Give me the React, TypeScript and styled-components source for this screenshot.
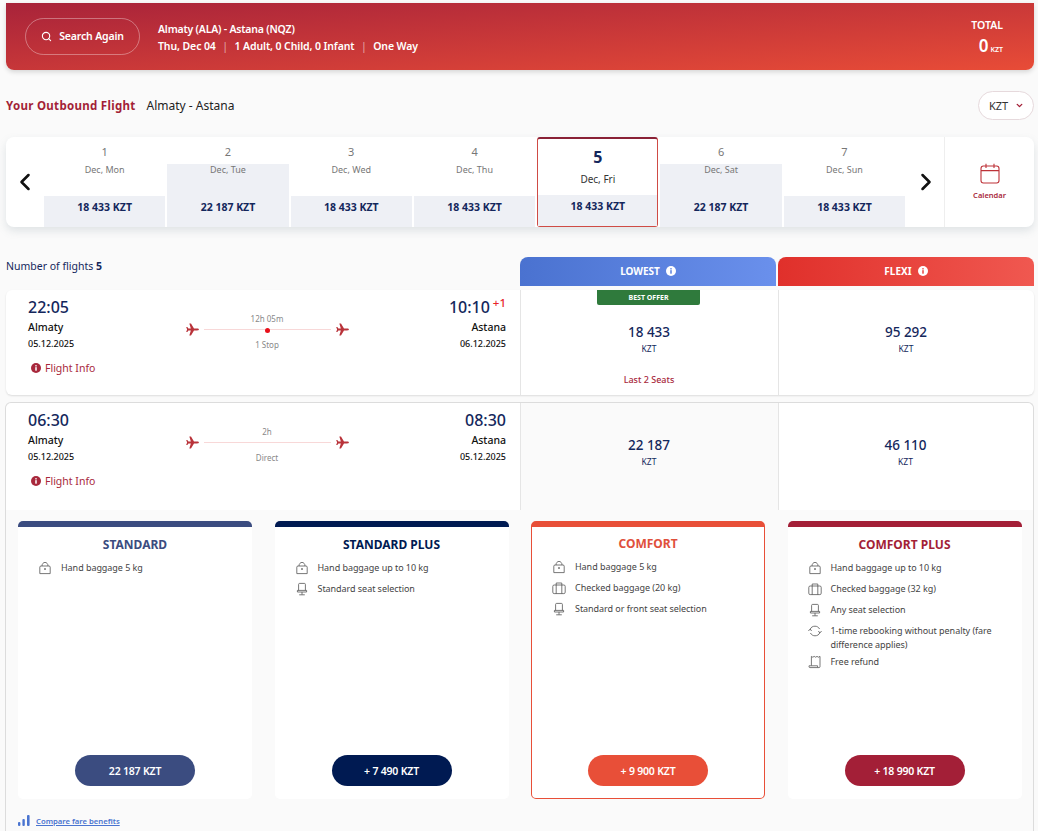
import React from 'react';
import styled, { createGlobalStyle } from 'styled-components';
import { ChevronDown, ChevronLeft, ChevronRight, Search } from 'lucide-react';

const GlobalStyle = createGlobalStyle`
  html, body {
    margin: 0;
    height: 831px;
    overflow: hidden;
    background: #fafafa;
  }
  * { box-sizing: border-box; }
  body {
    font-family: "Noto Sans", "Open Sans", sans-serif;
    color: #222;
  }
`;

const Page = styled.div`
  padding: 3px 4px 0 6px;
  height: 831px;
  overflow: hidden;
`;

const Banner = styled.header`
  height: 67px;
  display: flex;
  align-items: center;
  padding: 0 31px 0 19px;
  border-radius: 0 0 8px 8px;
  background: linear-gradient(176deg, #a8233a 0%, #e84c37 100%);
  box-shadow: 0 2px 5px rgba(0, 0, 0, 0.15);
  color: #fff;
`;

const SearchButton = styled.button`
  width: 115px;
  height: 37px;
  display: flex;
  align-items: center;
  justify-content: center;
  gap: 7px;
  padding: 0 0 1px;
  border: 1px solid rgba(255, 255, 255, 0.35);
  border-radius: 19px;
  background: transparent;
  color: #fff;
  font: 600 10.5px "Noto Sans", sans-serif;
  letter-spacing: -0.15px;
`;

const Summary = styled.div`
  margin: 2px 0 0 18px;
  font-size: 10.5px;
  font-weight: 600;
  line-height: 17px;
  letter-spacing: -0.2px;
`;

const SummaryDetails = styled.div`
  letter-spacing: -0.1px;
`;

const Divider = styled.span`
  margin: 0 6.5px;
  font-weight: 400;
  opacity: 0.55;
`;

const Total = styled.div`
  margin: 4px 0 0 auto;
  text-align: right;
  font-weight: 600;
`;

const TotalLabel = styled.div`
  font-size: 10.5px;
  line-height: 14px;
  margin-bottom: 4px;
`;

const TotalValue = styled.div`
  font-size: 17px;
  line-height: 20px;
  span {
    font-size: 7px;
    margin-left: 2px;
  }
`;

const OutboundRow = styled.div`
  height: 67px;
  display: flex;
  align-items: center;
  padding-top: 3px;
  font-size: 12px;
`;

const OutboundTitle = styled.strong`
  color: #a31f37;
  font-size: 11.5px;
  font-weight: 700;
  letter-spacing: 0.3px;
  margin-right: 11px;
`;

const CurrencySelect = styled.div`
  margin-left: auto;
  width: 56px;
  height: 29px;
  display: flex;
  align-items: center;
  justify-content: space-between;
  padding: 0 9px 0 10px;
  border: 1px solid #e6d9dc;
  border-radius: 15px;
  background: #fff;
  font-size: 11px;
  color: #a31f37;
  span {
    color: #333;
  }
`;

const DateStrip = styled.div`
  height: 90px;
  display: grid;
  grid-template-columns: 38px repeat(7, 123.3px) 1fr 90px;
  border-radius: 8px;
  background: #fff;
  box-shadow: 0 4px 8px rgba(120, 140, 150, 0.2);
`;

const ArrowCell = styled.div`
  display: flex;
  align-items: center;
  justify-content: center;
  color: #111;
`;

const DateCell = styled.div`
  display: flex;
  flex-direction: column;
  border-right: 2px solid #fff;
  text-align: center;
`;

const DayNumber = styled.div`
  height: 27px;
  padding-top: 7px;
  font-size: 11px;
  line-height: 16px;
  color: #777;
`;

const DateBody = styled.div<{ $tinted?: boolean }>`
  flex: 1;
  display: flex;
  flex-direction: column;
  background: ${p => (p.$tinted ? '#eef0f5' : 'transparent')};
`;

const DateLabel = styled.div`
  height: 32px;
  font-size: 9px;
  line-height: 12px;
  color: #777;
`;

const DatePrice = styled.div`
  height: 31px;
  background: #eef0f5;
  color: #14275c;
  font-size: 10.5px;
  font-weight: 700;
  line-height: 22px;
`;

const SelectedCell = styled.div`
  display: flex;
  flex-direction: column;
  margin-right: 2px;
  border: 1px solid #cf4b45;
  border-top: 2px solid #8a2136;
  border-radius: 3px;
  text-align: center;
`;

const SelectedDay = styled.div`
  flex: 1;
  padding-top: 8px;
  color: #14275c;
  font-size: 16px;
  font-weight: 700;
  line-height: 20px;
  small {
    display: block;
    margin-top: 5px;
    color: #333;
    font-size: 10px;
    font-weight: 400;
    line-height: 14px;
  }
`;

const SelectedPrice = styled.div`
  height: 31px;
  background: #eef0f5;
  color: #14275c;
  font-size: 10.5px;
  font-weight: 700;
  line-height: 22px;
`;

const CalendarCell = styled.div`
  display: flex;
  flex-direction: column;
  align-items: center;
  justify-content: center;
  gap: 6px;
  padding-bottom: 2px;
  border-left: 1px solid #eee;
  color: #a8283c;
  font-size: 7.5px;
  font-weight: 600;
`;

const FareGrid = styled.div`
  display: grid;
  grid-template-columns: 514px 256px 258px;
  margin-top: 30px;
`;

const FlightCount = styled.div`
  align-self: center;
  padding-bottom: 11px;
  font-size: 10.5px;
  color: #14275c;
`;

const FareTab = styled.div<{ $from: string; $to: string }>`
  height: 29px;
  display: flex;
  align-items: center;
  justify-content: center;
  gap: 6px;
  padding-bottom: 1px;
  border-radius: 8px 8px 0 0;
  background: linear-gradient(90deg, ${p => p.$from}, ${p => p.$to});
  color: #fff;
  font-size: 10px;
  font-weight: 700;
`;

const FlexiTab = styled(FareTab)`
  margin-left: 2px;
`;

const FlightCard = styled.div`
  display: grid;
  grid-template-columns: 514px 258px 1fr;
  height: 105px;
  margin-top: 4px;
  border-radius: 6px;
  background: #fff;
  box-shadow: 0 1px 2px rgba(0, 0, 0, 0.12);
`;

const OpenedFlight = styled.div`
  margin: 7px 0 0 -1px;
  height: 500px;
  border: 1px solid #dcdcdc;
  border-bottom: none;
  border-radius: 6px 6px 0 0;
  background: #fafafa;
`;

const OpenedRow = styled.div`
  display: grid;
  grid-template-columns: 514px 258px 1fr;
  height: 107px;
  background: #fff;
  border-radius: 6px 6px 0 0;
`;

const FlightInfo = styled.div`
  display: grid;
  grid-template-columns: 1fr 172px 1fr;
  padding: 7px 14px 0 22px;
`;

const Endpoint = styled.div<{ $right?: boolean }>`
  text-align: ${p => (p.$right ? 'right' : 'left')};
`;

const Time = styled.div`
  color: #14275c;
  font-size: 16px;
  font-weight: 500;
  line-height: 20px;
  sup {
    color: #e8222a;
    font-size: 11.5px;
    line-height: 0;
    margin-left: 3px;
    vertical-align: 6px;
  }
`;

const City = styled.div`
  margin-top: 1px;
  font-size: 10.5px;
  font-weight: 500;
  line-height: 18px;
  color: #111;
`;

const FlightDate = styled.div`
  font-size: 9px;
  font-weight: 500;
  line-height: 16px;
  color: #111;
`;

const InfoLink = styled.div`
  display: flex;
  align-items: center;
  gap: 4px;
  margin: 8px 0 0 3px;
  color: #a8283c;
  font-size: 10.5px;
  line-height: 16px;
`;

const Route = styled.div`
  display: grid;
  grid-template-columns: 13px 1fr 13px;
  column-gap: 5px;
  align-items: center;
  align-self: start;
  height: 46px;
  margin: 9px 4.5px 0;
`;

const RouteMiddle = styled.div`
  display: flex;
  flex-direction: column;
  align-items: center;
  padding-top: 6px;
  color: #888;
  font-size: 8px;
  line-height: 12px;
`;

const RouteLine = styled.div`
  position: relative;
  align-self: stretch;
  height: 1px;
  margin: 4px 0 9px;
  background: #f8d8d8;
`;

const StopDot = styled.span`
  position: absolute;
  left: 50%;
  top: -1px;
  width: 5px;
  height: 5px;
  margin-left: -2.5px;
  border-radius: 50%;
  background: #e8101a;
`;

const PriceCell = styled.div<{ $muted?: boolean }>`
  position: relative;
  display: flex;
  flex-direction: column;
  align-items: center;
  padding: 33px 1px 0 0;
  border-left: 1px solid #e5e5e5;
  background: ${p => (p.$muted ? '#fafafa' : 'transparent')};
  color: #14275c;
`;

const Amount = styled.div`
  font-size: 13.5px;
  font-weight: 500;
  line-height: 18px;
`;

const Currency = styled.div`
  font-size: 8.5px;
  line-height: 16px;
`;

const BestOffer = styled.div`
  position: absolute;
  top: 0;
  left: 76px;
  width: 103px;
  height: 15px;
  border-radius: 0 0 2px 2px;
  background: #2f7a3c;
  color: #fff;
  font-size: 7px;
  font-weight: 700;
  line-height: 15px;
  text-align: center;
`;

const SeatsLeft = styled.div`
  margin-top: 17px;
  color: #a8283c;
  font-size: 9px;
  font-weight: 500;
  line-height: 12px;
`;

const BundleList = styled.div`
  display: grid;
  grid-template-columns: repeat(4, 234px);
  column-gap: 22.5px;
  padding: 11px 0 0 12px;
`;

const Bundle = styled.article<{ $accent: string; $outlined?: boolean }>`
  height: 278px;
  display: flex;
  flex-direction: column;
  align-items: stretch;
  padding: ${p => (p.$outlined ? '10px 0 12px' : '11px 0 13px')};
  border-top: 6px solid ${p => p.$accent};
  border-left: ${p => (p.$outlined ? `1px solid ${p.$accent}` : 'none')};
  border-right: ${p => (p.$outlined ? `1px solid ${p.$accent}` : 'none')};
  border-bottom: ${p => (p.$outlined ? `1px solid ${p.$accent}` : 'none')};
  border-radius: 5px;
  background: #fff;
`;

const BundleTitle = styled.h3<{ $color: string }>`
  margin: 0;
  color: ${p => p.$color};
  font-size: 12px;
  font-weight: 700;
  line-height: 14px;
  text-align: center;
`;

const Features = styled.ul`
  margin: 6px 0 0;
  padding: 0 20px;
  list-style: none;
`;

const Feature = styled.li`
  display: grid;
  grid-template-columns: 14px 1fr;
  column-gap: 9px;
  min-height: 21px;
  align-items: start;
  padding-top: 3px;
  color: #444;
  font-size: 9px;
  line-height: 14px;
  letter-spacing: -0.05px;
`;

const BundleButton = styled.button<{ $color: string }>`
  align-self: center;
  width: 120px;
  height: 31px;
  margin-top: auto;
  border: none;
  border-radius: 16px;
  background: ${p => p.$color};
  color: #fff;
  font: 600 10.5px "Noto Sans", sans-serif;
  letter-spacing: -0.2px;
`;

const CompareLink = styled.a`
  display: inline-flex;
  align-items: flex-end;
  gap: 6px;
  margin: 16px 0 0 12px;
  color: #4a74d0;
  font-size: 7.7px;
  font-weight: 600;
  text-decoration: underline;
`;

const InfoDot = ({ color, mark, size = 10 }: { color: string; mark: string; size?: number }) => (
  <svg width={size} height={size} viewBox="0 0 12 12">
    <circle cx="6" cy="6" r="6" fill={color} />
    <circle cx="6" cy="3.4" r="1" fill={mark} />
    <rect x="5.1" y="5" width="1.8" height="4.2" fill={mark} />
  </svg>
);

const PlaneIcon = () => (
  <svg width="13" height="13" viewBox="0 0 14 14">
    <path
      fill="#b9333a"
      d="M0.2 4.4 L1.4 4.4 L2.6 6 L5.2 6 L3.6 0.6 L5.4 0.6 L8.6 6 L12 6 C13.2 6 13.9 6.5 13.9 7 C13.9 7.5 13.2 8 12 8 L8.6 8 L5.4 13.4 L3.6 13.4 L5.2 8 L2.6 8 L1.4 9.6 L0.2 9.6 L1.2 7 Z"
    />
  </svg>
);

const iconProps = { width: 14, height: 14, viewBox: '0 0 14 14', fill: 'none', stroke: '#555', strokeWidth: 0.8 };

const BagIcon = () => (
  <svg {...iconProps}>
    <path d="M1.8 12.6 L1.8 6.2 Q1.8 5 3 5 L11 5 Q12.2 5 12.2 6.2 L12.2 12.6 Z" />
    <path d="M4 5 C4 2.8 5.4 1.4 7 1.4 C8.6 1.4 10 2.8 10 5" />
    <circle cx="7" cy="8" r="0.5" fill="#444" />
  </svg>
);

const SuitcaseIcon = () => (
  <svg {...iconProps}>
    <rect x="0.8" y="4" width="12.4" height="8.6" rx="1.4" />
    <path d="M4.2 4 L4.2 2 L9.8 2 L9.8 4 M4.2 4 L4.2 12.6 M9.8 4 L9.8 12.6" />
  </svg>
);

const SeatIcon = () => (
  <svg {...iconProps}>
    <path d="M3.6 8.4 L3.6 2.4 C3.6 1.7 4 1.4 4.6 1.4 L9.4 1.4 C10 1.4 10.4 1.7 10.4 2.4 L10.4 8.4" />
    <path d="M2.4 8.4 L11.6 8.4 L11.6 10 L2.4 10 Z M7 10 L7 12.6 M4.2 12.8 L9.8 12.8" />
  </svg>
);

const RebookIcon = () => (
  <svg {...iconProps}>
    <path d="M2.2 5.2 C3 3.2 4.8 2.2 7 2.2 C9 2.2 10.6 3.2 11.6 5" />
    <path d="M11.8 8.8 C11 10.8 9.2 11.8 7 11.8 C5 11.8 3.4 10.8 2.4 9" />
    <path d="M0.4 7 L2.2 5 L3.6 7 M13.6 7 L11.8 9 L10.4 7" />
  </svg>
);

const RefundIcon = () => (
  <svg {...iconProps}>
    <path d="M3.4 10.6 L3.4 1.4 L4.8 2.2 L6.2 1.4 L7.6 2.2 L9 1.4 L10.4 2.2 L12 1.4 L12 10.8" />
    <path d="M1 10.8 L9.6 10.8 L9.6 12.6 L2 12.6 C1.4 12.6 1 12.2 1 11.6 Z M9.6 12.6 L11 12.6 C11.6 12.6 12 12.2 12 11.6 L12 10.8" />
  </svg>
);

const CalendarIcon = () => (
  <svg width="20" height="21" viewBox="0 0 20 21" fill="none" stroke="#bd3238" strokeWidth="1.1">
    <rect x="1" y="3" width="18" height="17" rx="2.4" />
    <path d="M1 7.6 L19 7.6 M6 0.8 L6 5 M14 0.8 L14 5" />
  </svg>
);

const BarsIcon = () => (
  <svg width="12" height="11" viewBox="0 0 12 11" fill="#4a74d0">
    <rect x="0" y="7" width="2.4" height="4" rx="1" />
    <rect x="4.4" y="4" width="2.4" height="7" rx="1" />
    <rect x="9" y="0" width="2.6" height="11" rx="1" />
  </svg>
);

const dates = [
  { day: 1, label: 'Dec, Mon', price: '18 433 KZT' },
  { day: 2, label: 'Dec, Tue', price: '22 187 KZT', tinted: true },
  { day: 3, label: 'Dec, Wed', price: '18 433 KZT' },
  { day: 4, label: 'Dec, Thu', price: '18 433 KZT' },
  { day: 5, label: 'Dec, Fri', price: '18 433 KZT', selected: true },
  { day: 6, label: 'Dec, Sat', price: '22 187 KZT', tinted: true },
  { day: 7, label: 'Dec, Sun', price: '18 433 KZT' },
];

const bundles = [
  {
    name: 'STANDARD',
    accent: '#3b4c80',
    title: '#3b4c80',
    price: '22 187 KZT',
    features: [{ icon: <BagIcon />, text: 'Hand baggage 5 kg' }],
  },
  {
    name: 'STANDARD PLUS',
    accent: '#001a52',
    title: '#001a52',
    price: '+ 7 490 KZT',
    features: [
      { icon: <BagIcon />, text: 'Hand baggage up to 10 kg' },
      { icon: <SeatIcon />, text: 'Standard seat selection' },
    ],
  },
  {
    name: 'COMFORT',
    accent: '#e84f38',
    title: '#e0503c',
    price: '+ 9 900 KZT',
    outlined: true,
    features: [
      { icon: <BagIcon />, text: 'Hand baggage 5 kg' },
      { icon: <SuitcaseIcon />, text: 'Checked baggage (20 kg)' },
      { icon: <SeatIcon />, text: 'Standard or front seat selection' },
    ],
  },
  {
    name: 'COMFORT PLUS',
    accent: '#a31f37',
    title: '#a31f37',
    price: '+ 18 990 KZT',
    features: [
      { icon: <BagIcon />, text: 'Hand baggage up to 10 kg' },
      { icon: <SuitcaseIcon />, text: 'Checked baggage (32 kg)' },
      { icon: <SeatIcon />, text: 'Any seat selection' },
      { icon: <RebookIcon />, text: '1-time rebooking without penalty (fare difference applies)' },
      { icon: <RefundIcon />, text: 'Free refund' },
    ],
  },
];

type LegProps = {
  from: string;
  to: string;
  nextDay?: boolean;
  arrivalDate: string;
  duration: string;
  stops: string;
  hasStop?: boolean;
};

const FlightLeg = ({ from, to, nextDay, arrivalDate, duration, stops, hasStop }: LegProps) => (
  <FlightInfo>
    <Endpoint>
      <Time>{from}</Time>
      <City>Almaty</City>
      <FlightDate>05.12.2025</FlightDate>
      <InfoLink>
        <InfoDot color="#a8283c" mark="#fff" />
        Flight Info
      </InfoLink>
    </Endpoint>
    <Route>
      <PlaneIcon />
      <RouteMiddle>
        {duration}
        <RouteLine>{hasStop && <StopDot />}</RouteLine>
        {stops}
      </RouteMiddle>
      <PlaneIcon />
    </Route>
    <Endpoint $right>
      <Time>
        {to}
        {nextDay && <sup>+1</sup>}
      </Time>
      <City>Astana</City>
      <FlightDate>{arrivalDate}</FlightDate>
    </Endpoint>
  </FlightInfo>
);

export default function App() {
  return (
    <Page>
      <GlobalStyle />
      <Banner>
        <SearchButton>
          <Search size={11} strokeWidth={2.4} />
          Search Again
        </SearchButton>
        <Summary>
          <div>Almaty (ALA) - Astana (NQZ)</div>
          <SummaryDetails>
            Thu, Dec 04<Divider>|</Divider>1 Adult, 0 Child, 0 Infant<Divider>|</Divider>One Way
          </SummaryDetails>
        </Summary>
        <Total>
          <TotalLabel>TOTAL</TotalLabel>
          <TotalValue>
            0<span>KZT</span>
          </TotalValue>
        </Total>
      </Banner>

      <OutboundRow>
        <OutboundTitle>Your Outbound Flight</OutboundTitle>
        Almaty - Astana
        <CurrencySelect>
          <span>KZT</span>
          <ChevronDown size={9} strokeWidth={3.6} />
        </CurrencySelect>
      </OutboundRow>

      <DateStrip>
        <ArrowCell>
          <ChevronLeft size={28} strokeWidth={2.2} />
        </ArrowCell>
        {dates.map(d =>
          d.selected ? (
            <SelectedCell key={d.day}>
              <SelectedDay>
                {d.day}
                <small>{d.label}</small>
              </SelectedDay>
              <SelectedPrice>{d.price}</SelectedPrice>
            </SelectedCell>
          ) : (
            <DateCell key={d.day}>
              <DayNumber>{d.day}</DayNumber>
              <DateBody $tinted={d.tinted}>
                <DateLabel>{d.label}</DateLabel>
                <DatePrice>{d.price}</DatePrice>
              </DateBody>
            </DateCell>
          ),
        )}
        <ArrowCell>
          <ChevronRight size={28} strokeWidth={2.2} />
        </ArrowCell>
        <CalendarCell>
          <CalendarIcon />
          Calendar
        </CalendarCell>
      </DateStrip>

      <FareGrid>
        <FlightCount>
          Number of flights <strong>5</strong>
        </FlightCount>
        <FareTab $from="#4a72d0" $to="#6a90ec">
          LOWEST <InfoDot color="#fff" mark="#5a80de" />
        </FareTab>
        <FlexiTab $from="#e0302b" $to="#f05850">
          FLEXI <InfoDot color="#fff" mark="#e84540" />
        </FlexiTab>
      </FareGrid>

      <FlightCard>
        <FlightLeg from="22:05" to="10:10" nextDay arrivalDate="06.12.2025" duration="12h 05m" stops="1 Stop" hasStop />
        <PriceCell>
          <BestOffer>BEST OFFER</BestOffer>
          <Amount>18 433</Amount>
          <Currency>KZT</Currency>
          <SeatsLeft>Last 2 Seats</SeatsLeft>
        </PriceCell>
        <PriceCell>
          <Amount>95 292</Amount>
          <Currency>KZT</Currency>
        </PriceCell>
      </FlightCard>

      <OpenedFlight>
        <OpenedRow>
          <FlightLeg from="06:30" to="08:30" arrivalDate="05.12.2025" duration="2h" stops="Direct" />
          <PriceCell $muted>
            <Amount>22 187</Amount>
            <Currency>KZT</Currency>
          </PriceCell>
          <PriceCell>
            <Amount>46 110</Amount>
            <Currency>KZT</Currency>
          </PriceCell>
        </OpenedRow>

        <BundleList>
          {bundles.map(b => (
            <Bundle key={b.name} $accent={b.accent} $outlined={b.outlined}>
              <BundleTitle $color={b.title}>{b.name}</BundleTitle>
              <Features>
                {b.features.map(f => (
                  <Feature key={f.text}>
                    {f.icon}
                    <span>{f.text}</span>
                  </Feature>
                ))}
              </Features>
              <BundleButton $color={b.accent}>{b.price}</BundleButton>
            </Bundle>
          ))}
        </BundleList>

        <CompareLink>
          <BarsIcon />
          Compare fare benefits
        </CompareLink>
      </OpenedFlight>
    </Page>
  );
}
